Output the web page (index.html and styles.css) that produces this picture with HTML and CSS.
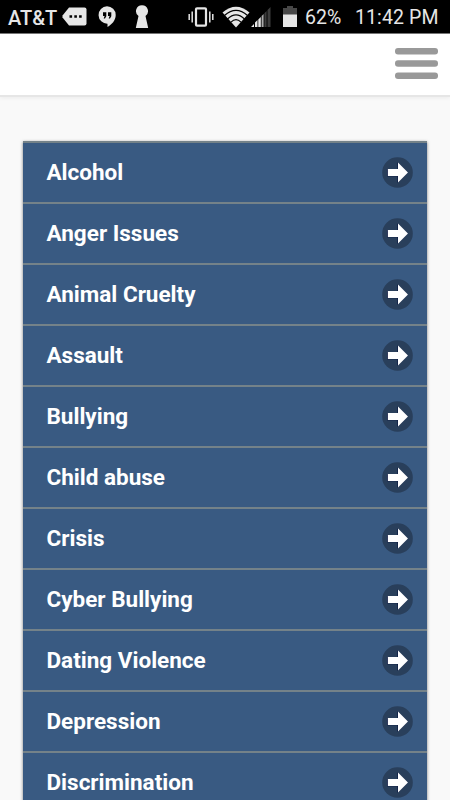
FILE: index.html
```
<!DOCTYPE html>
<html lang="en">

<head>
    <meta charset="UTF-8">
    <meta name="viewport" content="width=device-width, initial-scale=1.0">
    <title>Topics</title>
    <link rel="stylesheet" href="styles.css">
</head>

<body>
    <div class="status-bar">
        <span class="carrier">AT&amp;T</span>
        <svg class="message" width="26" height="20" viewBox="0 0 26 20">
            <path d="M7 .5h15.500a2 2 0 0 1 2 2v14a2 2 0 0 1-2 2H7L.5 10.500v-2z" fill="#e6e6e6" />
            <path d="M7.500 8.200h2.600v2.600H7.500zM12.300 8.200h2.600v2.600h-2.600zM17.100 8.200h2.600v2.600h-2.600z" fill="#000" />
        </svg>
        <svg class="hangouts" width="18" height="22" viewBox="0 0 18 22">
            <path d="M9 .3a8.700 8.700 0 0 1 8.700 8.700c0 5.500-4 9.500-8.200 12V17.700A8.700 8.700 0 1 1 9 .3z" fill="#e6e6e6" />
            <path d="M5 6.200h3.300v4L7 12.500H5.700l.9-2.500H5zM10 6.200h3.300v4L12 12.500h-1.300l.9-2.500H10z" fill="#000" />
        </svg>
        <svg class="keyhole" width="14" height="24" viewBox="0 0 14 24">
            <path d="M7 .3a5.900 5.900 0 0 1 3.500 10.700L13.200 23H.8L3.500 11A5.900 5.900 0 0 1 7 .3z" fill="#e6e6e6" />
        </svg>
        <svg class="vibrate" width="26" height="20" viewBox="0 0 26 20" fill="none" stroke="#e6e6e6" stroke-width="1.500">
            <rect x="8" y="1.300" width="10" height="17.400" rx="1" stroke-width="2.200" />
            <path d="M1.200 7v6M4.200 4.500v11M21.800 4.500v11M24.800 7v6" />
        </svg>
        <svg class="wifi" width="28" height="22" viewBox="0 0 28 22">
            <path d="M14 21.500.5 6.500Q14-5 27.500 6.500z" fill="#e6e6e6" />
            <path d="M2.500 9.500Q14-.8 25.500 9.500M5.500 13Q14 4.500 22.500 13M9 16.200Q14 11.200 19 16.200" fill="none" stroke="#000" stroke-width="1.200" />
        </svg>
        <svg class="signal" width="20" height="20" viewBox="0 0 20 20">
            <path d="M0 20l3-3v3zM4 20v-4.500l2.500-2.500v7zM7.300 20v-7.500L9.800 10v10z" fill="#e6e6e6" />
            <path d="M10.600 20V9L12.600 7v13z" fill="#aaa" />
            <path d="M13.400 20V6.200L15.600 4v16zM16.500 20V3L19.500 0v20z" fill="#3c3c3c" />
        </svg>
        <svg class="battery" width="14" height="22" viewBox="0 0 14 22">
            <path d="M4 0h6v2h4v7H0V2h4z" fill="#484848" />
            <path d="M0 8.500h14V21H0z" fill="#e6e6e6" />
        </svg>
        <span class="percent">62%</span>
        <span class="time">11:42 PM</span>
    </div>

    <header>
        <button class="menu" aria-label="Menu">
            <svg width="43" height="31" viewBox="0 0 43 31" fill="#999">
                <rect y="0" width="43" height="6.400" rx="3" />
                <rect y="12.300" width="43" height="6.400" rx="3" />
                <rect y="24.600" width="43" height="6.400" rx="3" />
            </svg>
        </button>
    </header>

    <svg class="symbols">
        <symbol id="arrow" viewBox="0 0 31 31">
            <circle cx="15.500" cy="15.500" r="15.300" fill="#293f5b" />
            <path d="M5 12.200h10.500V5.500L26 15.600 15.500 25.700v-6.500H5z" fill="#000c38" />
            <path d="M5.800 11.900h10.200V5.500L26 15.600 16 25.500v-6.400H5.800z" fill="#fff" />
        </symbol>
    </svg>

    <ul id="topics" class="topics"></ul>

    <script>
        const topics = [
            'Alcohol',
            'Anger Issues',
            'Animal Cruelty',
            'Assault',
            'Bullying',
            'Child abuse',
            'Crisis',
            'Cyber Bullying',
            'Dating Violence',
            'Depression',
            'Discrimination'
        ];

        document.getElementById('topics').innerHTML = topics
            .map(topic => `<li><a href="#">${topic}<svg class="arrow"><use href="#arrow"></use></svg></a></li>`)
            .join('');
    </script>
</body>

</html>
```
FILE: styles.css
```
* {
    margin: 0;
    padding: 0;
    box-sizing: border-box;
}

body {
    font-family: Roboto, sans-serif;
    height: 100vh;
    overflow: hidden;
    background: #f9f9f9;
}

.status-bar {
    display: flex;
    align-items: center;
    height: 34px;
    padding-left: 8px;
    background: #000;
    border-bottom: 1px solid #777;
    color: #e6e6e6;
    font-size: 19.5px;
    line-height: 34px;
    white-space: nowrap;
}

.status-bar svg {
    flex: none;
}

.status-bar span {
    padding-top: 2px;
}

.carrier {
    width: 54px;
    font-size: 20px;
    font-weight: 500;
}

.hangouts {
    margin-left: 10px;
}

.keyhole {
    margin-left: 19px;
}

.vibrate {
    margin-left: 39px;
}

.wifi {
    margin-left: 8px;
}

.signal {
    margin-left: 1px;
}

.battery {
    margin-left: 12px;
}

.percent {
    width: 50px;
    margin-left: 8px;
}

.time {
    letter-spacing: .1px;
}

header {
    display: flex;
    justify-content: flex-end;
    align-items: flex-start;
    height: 63px;
    padding: 14px 12px 0 0;
    background: #fff;
    border-bottom: 2px solid #e6e6e6;
    box-shadow: 0 1px 4px rgba(0, 0, 0, .06);
}

.menu {
    border: none;
    background: transparent;
    cursor: pointer;
}

.menu svg {
    display: block;
}

.symbols {
    display: none;
}

.topics {
    width: 404px;
    margin: 44px 0 0 23px;
    list-style: none;
    background: #395a82;
    box-shadow: 0 1px 3px rgba(0, 0, 0, .5);
}

.topics li {
    height: 61px;
    border-top: 2px solid #748289;
}

.topics a {
    display: flex;
    align-items: center;
    justify-content: space-between;
    height: 58px;
    padding: 0 14px 0 23.5px;
    color: #fff;
    font-size: 22.5px;
    font-weight: 700;
    text-decoration: none;
}

.arrow {
    width: 31px;
    height: 31px;
}
```
